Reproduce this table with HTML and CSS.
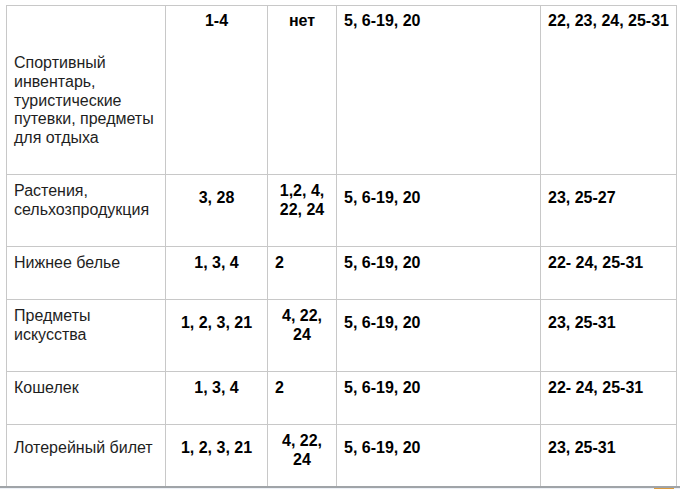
FILE: index.html
```html
<!DOCTYPE html>
<html lang="ru">
<head>
<meta charset="utf-8">
<title>Таблица</title>
<link rel="stylesheet" href="styles.css">
</head>
<body>
<main class="page">
  <div class="grid" role="table">
    <div class="cell name first">Спортивный<br>инвентарь,<br>туристические<br>путевки, предметы<br>для отдыха</div>
    <div class="cell num center top">1-4</div>
    <div class="cell num center top">нет</div>
    <div class="cell num top">5, 6-19, 20</div>
    <div class="cell num top">22, 23, 24, 25-31</div>

    <div class="cell name">Растения,<br>сельхозпродукция</div>
    <div class="cell num center up">3, 28</div>
    <div class="cell num center">1,2, 4,<br>22, 24</div>
    <div class="cell num up">5, 6-19, 20</div>
    <div class="cell num up">23, 25-27</div>

    <div class="cell name">Нижнее белье</div>
    <div class="cell num center">1, 3, 4</div>
    <div class="cell num">2</div>
    <div class="cell num">5, 6-19, 20</div>
    <div class="cell num">22- 24, 25-31</div>

    <div class="cell name">Предметы<br>искусства</div>
    <div class="cell num center up">1, 2, 3, 21</div>
    <div class="cell num center">4, 22,<br>24</div>
    <div class="cell num up">5, 6-19, 20</div>
    <div class="cell num up">23, 25-31</div>

    <div class="cell name">Кошелек</div>
    <div class="cell num center">1, 3, 4</div>
    <div class="cell num">2</div>
    <div class="cell num">5, 6-19, 20</div>
    <div class="cell num">22- 24, 25-31</div>

    <div class="cell name up last">Лотерейный билет</div>
    <div class="cell num center up last">1, 2, 3, 21</div>
    <div class="cell num center last">4, 22,<br>24</div>
    <div class="cell num up last">5, 6-19, 20</div>
    <div class="cell num up last">23, 25-31</div>
  </div>
</main>
<footer class="statusbar"><span class="marker"></span></footer>
</body>
</html>
```
FILE: styles.css
```css
html, body {
  margin: 0;
  padding: 0;
  background: #ffffff;
}

body {
  height: 489px;
  overflow: hidden;
  display: flex;
  flex-direction: column;
  font-family: "Liberation Sans", Arial, sans-serif;
  font-size: 16px;
}

.page {
  height: 486px;
  overflow: hidden;
  padding: 5px 0 0 6px;
  box-sizing: border-box;
  flex: none;
}

.grid {
  display: grid;
  grid-template-columns: 158px 101px 68px 203px 135px;
  grid-template-rows: 168px 71px 52px 71px 52px 71px;
  gap: 1px;
  width: fit-content;
  background: #c8c8c8;
  border: 1px solid #c8c8c8;
}

.cell {
  background: #ffffff;
  display: flex;
  flex-direction: column;
  justify-content: center;
  padding: 7px 7px 27px 7px;
  box-sizing: border-box;
  line-height: 18.75px;
  white-space: nowrap;
  overflow: hidden;
}

.name {
  color: #1e1e1e;
  font-weight: normal;
}

.num {
  color: #000000;
  font-weight: bold;
}

.center {
  text-align: center;
}

.up {
  padding-bottom: 32px;
}

.last {
  padding-top: 8px;
}

.top {
  justify-content: flex-start;
  padding-top: 6px;
}

.first {
  justify-content: flex-start;
  padding-top: 48px;
}

.statusbar {
  flex: none;
  height: 1px;
  border-top: 2px solid #a0a4a8;
  background: #edf1f7;
  display: flex;
  justify-content: flex-end;
  padding-right: 6px;
}

.marker {
  width: 20px;
  height: 1px;
  background: #dd9b3c;
}
```
